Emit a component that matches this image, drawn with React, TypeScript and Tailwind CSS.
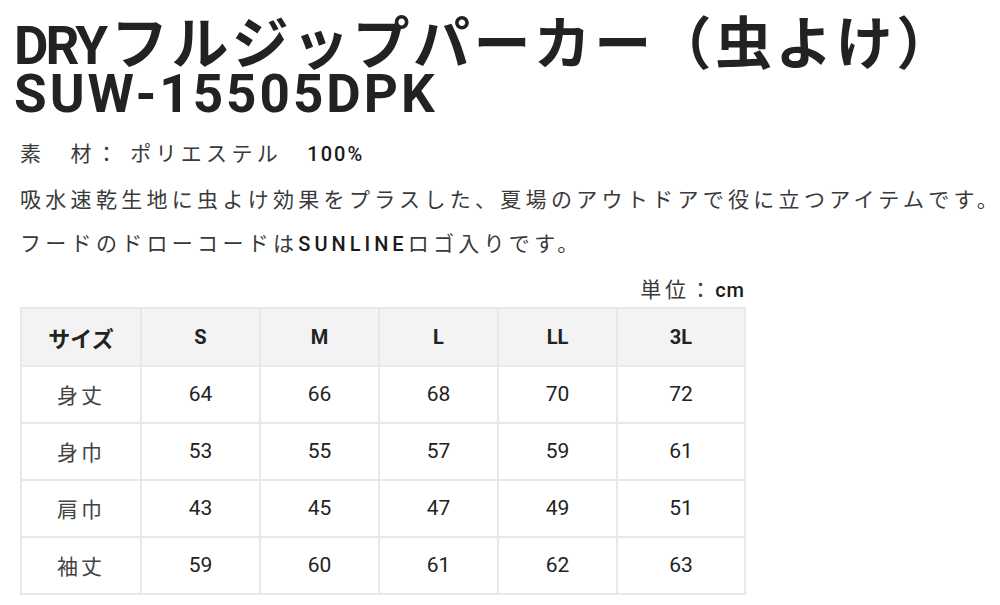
import React from "react";

const jp = "font-['Noto_Sans_CJK_JP',sans-serif]";
const din = "font-['Roboto','Noto_Sans_CJK_JP',sans-serif]";

const sizes = ["S", "M", "L", "LL", "3L"];
const rows: [string, number[]][] = [
  ["身丈", [64, 66, 68, 70, 72]],
  ["身巾", [53, 55, 57, 59, 61]],
  ["肩巾", [43, 45, 47, 49, 51]],
  ["袖丈", [59, 60, 61, 62, 63]],
];
const widths = ["w-[120px]", "w-[119px]", "w-[119px]", "w-[119px]", "w-[119px]", "w-[128px]"];

export default function App() {
  return (
    <div className="w-[1000px] h-[605px] bg-white overflow-hidden text-[#222]">
      <div className="pl-[14px] pt-[12px] text-[#222] font-bold whitespace-nowrap">
        <div className="h-[55px] leading-[55px] flex items-baseline">
          <span className={`${din} text-[53px] tracking-[-3px] mr-[6px]`}>DRY</span>
          <span className={`${jp} text-[57px] tracking-[3.4px]`}>フルジップパーカー（虫よけ）</span>
        </div>
        <div className={`${din} h-[55px] leading-[55px] text-[53px] tracking-[3px]`}>SUW-15505DPK</div>
      </div>
      <div className={`${jp} pl-[20px] pt-[8px] text-[21px] leading-[44px] tracking-[4.3px] text-[#3a3a3a] whitespace-nowrap`}>
        <div>
          素　材：&nbsp;ポリエステル　<span className={`${din} font-medium text-[20px] tracking-[2px] text-[#1a1a1a]`}>100%</span>
        </div>
        <div>吸水速乾生地に虫よけ効果をプラスした、夏場のアウトドアで役に立つアイテムです。</div>
        <div>
          フードのドローコードは<span className={`${din} font-medium text-[20px] tracking-[4px] text-[#1a1a1a]`}>SUNLINE</span>ロゴ入りです。
        </div>
        <div className="w-[725px] text-right tracking-[4px]">
          単位：<span className={`${din} font-medium text-[20px] tracking-[1px] text-[#1a1a1a]`}>cm</span>
        </div>
      </div>
      <table className="ml-[20px] -mt-[5px] border-collapse">
        <thead>
          <tr className="bg-[#f3f3f3] h-[58px]">
            <th className={`${widths[0]} ${jp} border-2 border-[#e8e8e8] text-[22px] font-bold text-[#222]`}>サイズ</th>
            {sizes.map((s, i) => (
              <th key={s} className={`${widths[i + 1]} ${din} border-2 border-[#e8e8e8] text-[20px] font-bold text-[#222]`}>
                {s}
              </th>
            ))}
          </tr>
        </thead>
        <tbody>
          {rows.map(([label, vals]) => (
            <tr key={label} className="h-[57px]">
              <td className={`${jp} border-2 border-[#e8e8e8] text-center text-[21px] tracking-[3px] text-[#444]`}>{label}</td>
              {vals.map((v, i) => (
                <td key={i} className={`${din} border-2 border-[#e8e8e8] text-center text-[21px] text-[#222]`}>
                  {v}
                </td>
              ))}
            </tr>
          ))}
        </tbody>
      </table>
    </div>
  );
}
